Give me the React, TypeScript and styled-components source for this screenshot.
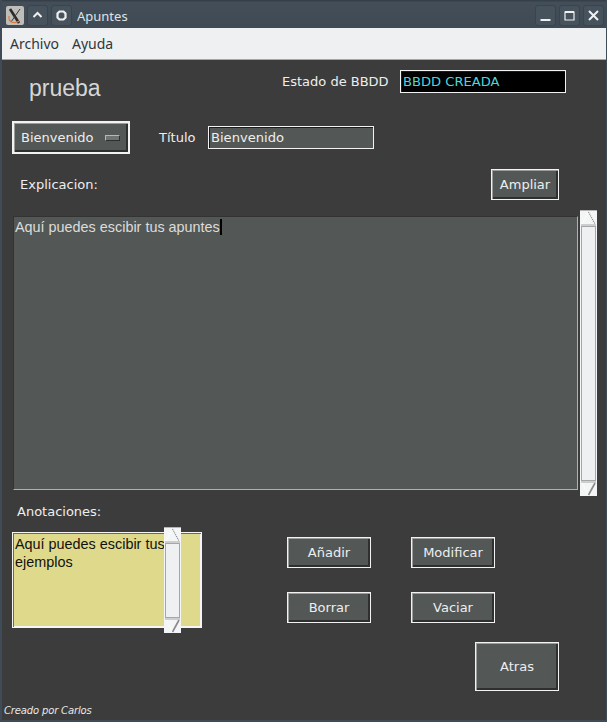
import React from 'react';
import styled, { createGlobalStyle } from 'styled-components';

const GlobalStyle = createGlobalStyle`
  html, body {
    margin: 0;
    padding: 0;
    background: #3c3c3c;
  }
`;

const Window = styled.div`
  width: 607px;
  height: 722px;
  display: flex;
  flex-direction: column;
  overflow: hidden;
  background: #3c3c3c;
  border-left: 2px solid #3f4b56;
  border-right: 1px solid #3f4b56;
  border-bottom: 2px solid #3f4b56;
  box-sizing: border-box;
`;

const TitleBar = styled.div`
  height: 28px;
  margin: 0 -1px 0 -2px;
  flex: none;
  display: flex;
  align-items: center;
  gap: 3px;
  padding: 2px 3px 0 6px;
  box-sizing: border-box;
  background: linear-gradient(#36404a 0, #36404a 1px, #434e58 2px, #3f4a54 100%);
`;

const AppIcon = styled.div`
  width: 18px;
  height: 19px;
  background: #bdbdb9;
  border-radius: 2px;
`;

const WmButton = styled.div`
  width: 21px;
  height: 21px;
  display: flex;
  align-items: center;
  justify-content: center;
  box-sizing: border-box;
  background: #46525c;
  border: 1px solid #39444d;
  border-radius: 3px;
`;

const TitleText = styled.span`
  font: 13px 'Noto Sans', sans-serif;
  color: #dfe3e6;
  margin: 1px 0 0 2px;
  flex: 1;
`;

const MenuBar = styled.div`
  height: 32px;
  margin: 0 -1px 0 0;
  flex: none;
  display: flex;
  align-items: center;
  gap: 13px;
  padding: 0 8px;
  box-sizing: border-box;
  background: #eff0f1;
  border-bottom: 1px solid #a6a6a6;
  font: 14px 'Noto Sans', sans-serif;
  color: #31363b;
`;

const Body = styled.div`
  flex: 1;
  display: flex;
  flex-direction: column;
`;

const Row = styled.div<{ $height: number; $left?: number; $top?: number }>`
  height: ${(p) => p.$height}px;
  margin-top: ${(p) => p.$top ?? 0}px;
  flex: none;
  display: flex;
  align-items: center;
  padding-left: ${(p) => p.$left ?? 0}px;
`;

const Label = styled.span<{ $left?: number; $width?: number }>`
  font: 13px 'DejaVu Sans', sans-serif;
  color: #eeeeee;
  margin-left: ${(p) => p.$left ?? 0}px;
  width: ${(p) => (p.$width ? `${p.$width}px` : 'auto')};
  flex: none;
  white-space: nowrap;
`;

const Heading = styled.h1`
  font: 23px 'Liberation Sans', sans-serif;
  color: #d6d6d6;
  margin: 13px 0 0 27px;
  width: 253px;
`;

const Entry = styled.div<{ $dark?: boolean }>`
  width: 166px;
  height: 23px;
  flex: none;
  box-sizing: border-box;
  border: 1px solid #f2f2f2;
  padding: 1px 2px;
  box-shadow: inset 1px 1px 0 #1c1c1c;
  background: ${(p) => (p.$dark ? '#000000' : '#535856')};
  color: ${(p) => (p.$dark ? '#4dd6de' : '#eeeeee')};
  font: 13.1px/19px 'DejaVu Sans', sans-serif;
  white-space: nowrap;
`;

const Bevel = styled.div<{ $w: number; $h: number; $left?: number }>`
  width: ${(p) => p.$w}px;
  height: ${(p) => p.$h}px;
  margin-left: ${(p) => p.$left ?? 0}px;
  flex: none;
  box-sizing: border-box;
  display: flex;
  align-items: center;
  justify-content: center;
  background: #535856;
  border: 1px solid #f2f2f2;
  box-shadow: inset 1px 1px 0 #9a9d9b, inset -2px -2px 0 #2e3030;
  font: 13px 'DejaVu Sans', sans-serif;
  color: #eeeeee;
`;

const Option = styled(Bevel)`
  border-width: 2px;
  justify-content: flex-start;
  padding-left: 7px;
  gap: 11px;
`;

const OptionMark = styled.span`
  width: 15px;
  height: 6px;
  box-sizing: border-box;
  background: #6f7371;
  border: 1px solid;
  border-color: #b8b8b8 #2e3030 #2e3030 #b8b8b8;
`;

const TextRow = styled.div`
  height: 286px;
  margin-top: 2px;
  flex: none;
  display: flex;
  align-items: center;
  padding-left: 11px;
  gap: 2px;
`;

const MainText = styled.div`
  width: 565px;
  height: 274px;
  flex: none;
  box-sizing: border-box;
  background: #535856;
  border: 1px solid;
  border-color: #333 #b0b0b0 #b0b0b0 #333;
  padding: 1px 1px;
  font: 14.4px/18px 'Liberation Sans', sans-serif;
  color: #dcdcdc;
`;

const Caret = styled.span`
  display: inline-block;
  width: 2px;
  height: 16px;
  margin-bottom: -3px;
  background: #000;
`;

const Bar = styled.div<{ $h: number }>`
  width: 17px;
  height: ${(p) => p.$h}px;
  flex: none;
  display: flex;
  flex-direction: column;
  box-sizing: border-box;
  background: #f4f5f6;
  border-top: 1px solid #b5b5b5;
`;

const Thumb = styled.div`
  flex: 1;
  margin: 0 1px;
  box-sizing: border-box;
  background: #eff0f1;
  border: 1px solid #a6a6a6;
`;

const Arrow = styled.svg`
  display: block;
  width: 17px;
  height: 15px;
  flex: none;
`;

const LowerGrid = styled.div`
  height: 101px;
  flex: none;
  display: flex;
  align-items: flex-start;
`;

const NotesBox = styled.div`
  position: relative;
  width: 190px;
  height: 96px;
  margin: 5px 0 0 10px;
  flex: none;
  box-sizing: border-box;
  background: #dfd98b;
  border: 1px solid #f5f5f5;
  box-shadow: inset 1px 1px 0 #6e6b45, inset -1px -1px 0 #f5f5f5;
  padding: 2px 0 0 2px;
  font: 14.4px/18px 'Liberation Sans', sans-serif;
  color: #111;
`;

const NotesLine = styled.div`
  width: 155px;
`;

const NotesBar = styled.div`
  position: absolute;
  left: 151px;
  top: -6px;
`;

const ActionGrid = styled.div`
  display: grid;
  grid-template-columns: 84px 84px;
  grid-auto-rows: 31px;
  column-gap: 40px;
  row-gap: 24px;
  margin: 10px 0 0 85px;
`;

const BackRow = styled.div`
  height: 50px;
  margin-top: 14px;
  flex: none;
  display: flex;
  padding-left: 473px;
`;

const Credit = styled.div`
  margin: 13px 0 0 2px;
  font: italic 10px 'DejaVu Sans', sans-serif;
  letter-spacing: -0.15px;
  color: #e8e8e8;
`;

const ArrowUp = () => (
  <Arrow viewBox="0 0 17 15">
    <path d="M2 13 L8.5 1" stroke="#ffffff" strokeWidth="1.2" strokeDasharray="1 1" fill="none" />
    <path d="M8.5 1 L15 13" stroke="#8a8a8a" strokeWidth="1.2" strokeDasharray="1 1" fill="none" />
    <path d="M1 14 H16" stroke="#a6a6a6" />
  </Arrow>
);

const ArrowDown = () => (
  <Arrow viewBox="0 0 17 15">
    <path d="M1 1 H16" stroke="#a6a6a6" />
    <path d="M2 2 L8.5 14" stroke="#ffffff" strokeWidth="1.2" strokeDasharray="1 1" fill="none" />
    <path d="M15 2 L8.5 14" stroke="#8a8a8a" strokeWidth="1.6" fill="none" />
  </Arrow>
);

const Scrollbar: React.FC<{ height: number }> = ({ height }) => (
  <Bar $h={height}>
    <ArrowUp />
    <Thumb />
    <ArrowDown />
  </Bar>
);

const XLogo = () => (
  <svg width="18" height="19" viewBox="0 0 18 19">
    <path d="M4 3 L13 17" stroke="#2a2a2a" strokeWidth="2.6" fill="none" />
    <path d="M14 3 L5 16" stroke="#3a3a3a" strokeWidth="1" fill="none" />
    <path d="M3 10 C2 17 9 18 13 15" stroke="#e07a3a" strokeWidth="1.2" fill="none" />
  </svg>
);

const App: React.FC = () => (
  <>
    <GlobalStyle />
    <Window>
      <TitleBar>
        <AppIcon>
          <XLogo />
        </AppIcon>
        <WmButton>
          <svg width="13" height="13" viewBox="0 0 13 13">
            <path d="M2.5 8 L6.5 4 L10.5 8" stroke="#f0f0f0" strokeWidth="2" fill="none" />
          </svg>
        </WmButton>
        <WmButton>
          <svg width="13" height="13" viewBox="0 0 13 13">
            <path d="M4.5 2.5 H8.5 L10.5 4.5 V8.5 L8.5 10.5 H4.5 L2.5 8.5 V4.5 Z" stroke="#f0f0f0" strokeWidth="2.2" fill="none" />
          </svg>
        </WmButton>
        <TitleText>Apuntes</TitleText>
        <WmButton>
          <svg width="13" height="13" viewBox="0 0 13 13">
            <path d="M1.5 11 H11.5" stroke="#f0f0f0" strokeWidth="2" fill="none" />
          </svg>
        </WmButton>
        <WmButton>
          <svg width="13" height="13" viewBox="0 0 13 13">
            <path d="M2 3 H11 V11 H2 Z" stroke="#f0f0f0" strokeWidth="1.2" fill="none" />
            <path d="M2 3 H11" stroke="#f0f0f0" strokeWidth="2" />
          </svg>
        </WmButton>
        <WmButton>
          <svg width="13" height="13" viewBox="0 0 13 13">
            <path d="M2 2 L11 11 M11 2 L2 11" stroke="#f0f0f0" strokeWidth="2" fill="none" />
          </svg>
        </WmButton>
      </TitleBar>
      <MenuBar>
        <span>Archivo</span>
        <span>Ayuda</span>
      </MenuBar>
      <Body>
        <Row $height={43}>
          <Heading>prueba</Heading>
          <Label $width={118}>Estado de BBDD</Label>
          <Entry $dark>BBDD CREADA</Entry>
        </Row>
        <Row $height={47} $top={11} $left={10}>
          <Option $w={118} $h={33}>
            Bienvenido
            <OptionMark />
          </Option>
          <Label $left={29} $width={49}>Título</Label>
          <Entry>Bienvenido</Entry>
        </Row>
        <Row $height={47} $left={18}>
          <Label $width={471}>Explicacion:</Label>
          <Bevel $w={68} $h={31}>Ampliar</Bevel>
        </Row>
        <TextRow>
          <MainText>
            Aquí puedes escibir tus apuntes
            <Caret />
          </MainText>
          <Scrollbar height={286} />
        </TextRow>
        <Row $height={31} $left={15}>
          <Label>Anotaciones:</Label>
        </Row>
        <LowerGrid>
          <NotesBox>
            <NotesLine>Aquí puedes escibir tus ejemplos</NotesLine>
            <NotesBar>
              <Scrollbar height={106} />
            </NotesBar>
          </NotesBox>
          <ActionGrid>
            <Bevel $w={84} $h={31}>Añadir</Bevel>
            <Bevel $w={84} $h={31}>Modificar</Bevel>
            <Bevel $w={84} $h={31}>Borrar</Bevel>
            <Bevel $w={84} $h={31}>Vaciar</Bevel>
          </ActionGrid>
        </LowerGrid>
        <BackRow>
          <Bevel $w={84} $h={49}>Atras</Bevel>
        </BackRow>
        <Credit>Creado por Carlos</Credit>
      </Body>
    </Window>
  </>
);

export default App;
